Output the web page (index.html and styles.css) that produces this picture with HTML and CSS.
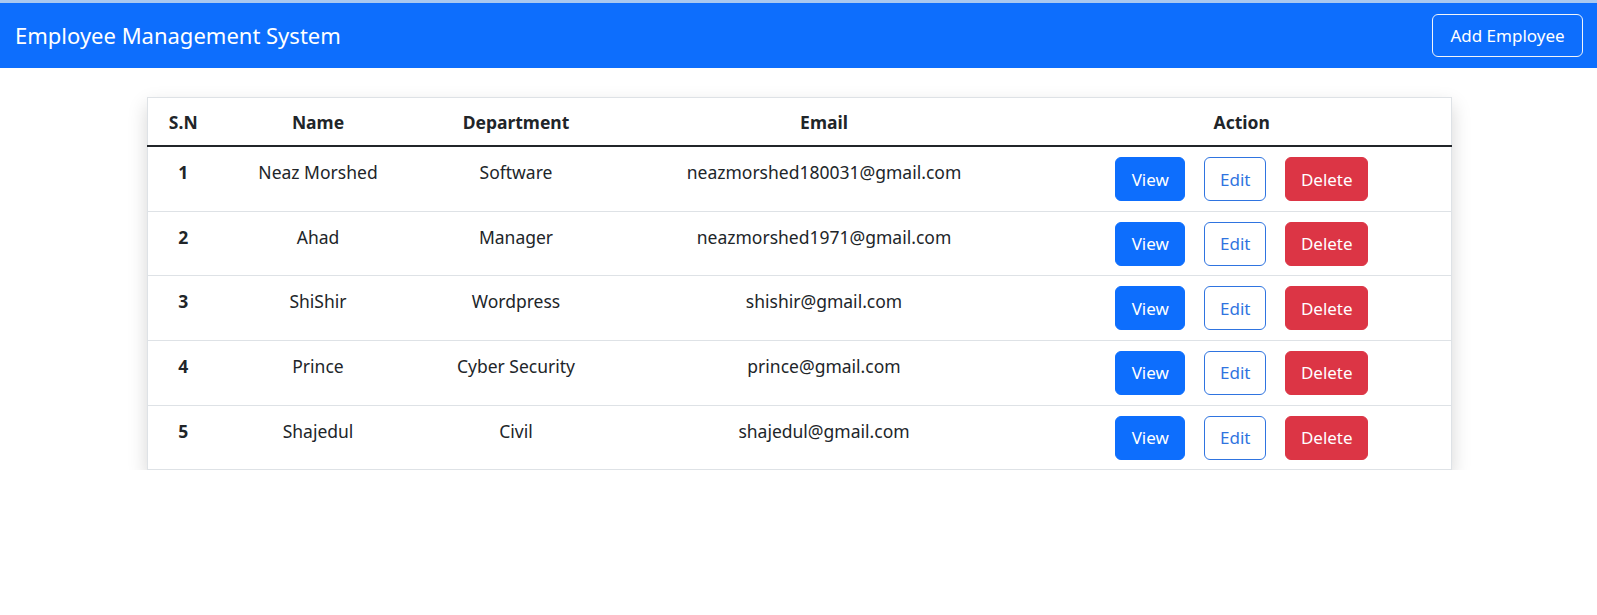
FILE: index.html
```html
<!DOCTYPE html>
<html lang="en">
<head>
<meta charset="utf-8">
<title>Employee Management System</title>
<link rel="stylesheet" href="styles.css">
</head>
<body>
<div class="topline"></div>
<nav class="navbar">
  <span class="brand">Employee Management System</span>
  <button class="btn btn-outline-light">Add Employee</button>
</nav>
<main class="container">
  <table class="emp-table">
    <colgroup>
      <col class="c-sn"><col class="c-name"><col class="c-dept"><col class="c-email"><col class="c-action">
    </colgroup>
    <thead>
      <tr><th>S.N</th><th>Name</th><th>Department</th><th>Email</th><th>Action</th></tr>
    </thead>
    <tbody>
      <tr><th>1</th><td>Neaz Morshed</td><td>Software</td><td>neazmorshed180031@gmail.com</td>
        <td><div class="actions"><button class="btn btn-primary">View</button><button class="btn btn-outline-primary">Edit</button><button class="btn btn-danger">Delete</button></div></td></tr>
      <tr><th>2</th><td>Ahad</td><td>Manager</td><td>neazmorshed1971@gmail.com</td>
        <td><div class="actions"><button class="btn btn-primary">View</button><button class="btn btn-outline-primary">Edit</button><button class="btn btn-danger">Delete</button></div></td></tr>
      <tr><th>3</th><td>ShiShir</td><td>Wordpress</td><td>shishir@gmail.com</td>
        <td><div class="actions"><button class="btn btn-primary">View</button><button class="btn btn-outline-primary">Edit</button><button class="btn btn-danger">Delete</button></div></td></tr>
      <tr><th>4</th><td>Prince</td><td>Cyber Security</td><td>prince@gmail.com</td>
        <td><div class="actions"><button class="btn btn-primary">View</button><button class="btn btn-outline-primary">Edit</button><button class="btn btn-danger">Delete</button></div></td></tr>
      <tr><th>5</th><td>Shajedul</td><td>Civil</td><td>shajedul@gmail.com</td>
        <td><div class="actions"><button class="btn btn-primary">View</button><button class="btn btn-outline-primary">Edit</button><button class="btn btn-danger">Delete</button></div></td></tr>
    </tbody>
  </table>
</main>
</body>
</html>
```
FILE: styles.css
```css
* { box-sizing: border-box; }
body {
  margin: 0;
  font-family: "Noto Sans", "Open Sans", sans-serif;
  font-size: 17.5px;
  line-height: 1.5;
  color: #212529;
  background: #fff;
}
.topline { height: 3px; background: #a9c9f0; }
.navbar {
  height: 65px;
  background: #0d6efd;
  display: flex;
  align-items: center;
  justify-content: space-between;
  padding: 0 14px 0 15px;
}
.brand { color: #fff; font-size: 22px; }
.btn {
  font-family: inherit;
  font-size: 17px;
  line-height: 1.5;
  height: 44px;
  padding: 0 13px;
  border-radius: 6px;
  border: 1px solid transparent;
  cursor: pointer;
}
.btn-outline-light { background: transparent; color: #fff; border-color: #f0f4fa; width: 151px; height: 43px; }
.btn-primary { background: #0d6efd; color: #fff; border-color: #0d6efd; width: 70px; }
.btn-outline-primary { background: #fff; color: #2f74e0; border-color: #2f74e0; width: 62px; }
.btn-danger { background: #dc3545; color: #fff; border-color: #dc3545; width: 83px; }
.container { width: 1304px; margin: 29px auto 0; }
.emp-table {
  width: 100%;
  border-collapse: collapse;
  table-layout: fixed;
  border: 1px solid #dee2e6;
  box-shadow: 0 8px 18px rgba(0,0,0,0.17);
  text-align: center;
}
.c-sn { width: 72px; }
.c-name { width: 198px; }
.c-dept { width: 198px; }
.c-email { width: 418px; }
.c-action { width: 418px; }
.emp-table th, .emp-table td {
  padding: 12px 9px 9.6px;
  vertical-align: top;
  border-bottom: 1px solid #dee2e6;
}
.emp-table thead th {
  padding: 11px 9px 10px;
  border-bottom: 2px solid #212529;
}
.emp-table tbody tr:last-child th, .emp-table tbody tr:last-child td { border-bottom: 0; }
.actions { display: flex; justify-content: center; gap: 19px; margin-top: -2px; }
```
